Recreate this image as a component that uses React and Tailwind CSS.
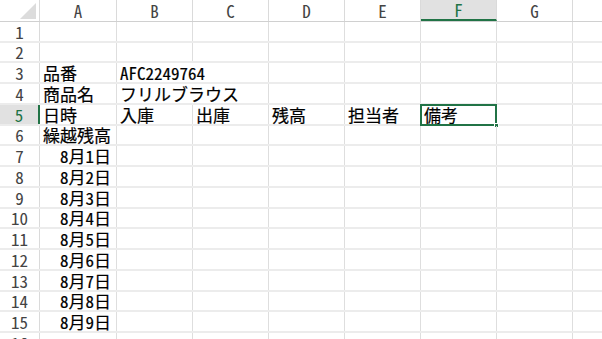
import React from "react";

const FONT = { fontFamily: '"Noto Sans Mono CJK JP", "Noto Sans CJK JP", monospace' };

const colW = ["w-[77px]", "w-[76px]", "w-[76px]", "w-[76px]", "w-[76px]", "w-[76px]", "w-[76px]"];
const letters = ["A", "B", "C", "D", "E", "F", "G"];
const rowH = [21, 20, 21, 21, 21, 20, 21, 21, 21, 20, 21, 21, 21, 20, 21, 21];
const hCls = { 20: "h-[20px]", 21: "h-[21px]" };

const data = {
  3: { 0: "品番", 1: "AFC2249764" },
  4: { 0: "商品名", 1: "フリルブラウス" },
  5: { 0: "日時", 1: "入庫", 2: "出庫", 3: "残高", 4: "担当者", 5: "備考" },
  6: { 0: "繰越残高" },
};
for (let i = 7; i <= 15; i++) data[i] = { 0: `8月${i - 6}日`, right: true };

export default function App() {
  return (
    <div className="w-[602px] h-[339px] overflow-hidden bg-white text-[17px] text-black" style={FONT}>
      {/* column header */}
      <div className="flex h-[22px] border-b border-[#d0d0d0]">
        <div className="relative w-[40px] shrink-0 border-r border-[#dadada]">
          <div className="absolute right-[3px] bottom-[2px] w-0 h-0 border-l-[16px] border-l-transparent border-b-[16px] border-b-[#dcdcdc]" />
        </div>
        {letters.map((l, i) => {
          const sel = l === "F";
          return (
            <div
              key={l}
              className={`${colW[i]} shrink-0 border-r border-[#dadada] flex items-center justify-center leading-[20px] ${
                sel ? "bg-[#e1e1e1] text-[#217346] border-b-2 border-b-[#217346]" : "text-[#444]"
              }`}
            >
              {l}
            </div>
          );
        })}
        <div className="flex-1" />
      </div>
      {rowH.map((h, ri) => {
        const r = ri + 1;
        const rowSel = r === 5;
        const d = data[r] || {};
        return (
          <div key={r} className={`flex ${hCls[h]} border-b-2 border-[#ececec]`}>
            <div
              className={`w-[40px] shrink-0 flex items-end justify-center leading-[19px] ${
                rowSel
                  ? "bg-[#e1e1e1] text-[#217346] border-r-2 border-r-[#217346]"
                  : "text-[#444] border-r border-r-[#dadada]"
              }`}
            >
              {r}
            </div>
            {colW.map((w, ci) => {
              const txt = d[ci];
              const noBorder = (r === 3 || r === 4) && ci === 1;
              const isSel = r === 5 && ci === 5;
              return (
                <div
                  key={ci}
                  className={`${w} shrink-0 relative flex items-end leading-[19px] whitespace-nowrap [-webkit-text-stroke:0.2px_black] ${
                    noBorder ? "" : "border-r border-[#dedede]"
                  } ${d.right && ci === 0 ? "justify-end pr-[5px]" : "pl-[3px]"}`}
                >
                  {txt && <span className="relative">{txt}</span>}
                  {isSel && (
                    <div className="absolute -left-[1px] -top-[1px] -right-[1px] -bottom-[2px] border-2 border-[#217346]">
                      <div className="absolute -right-[4px] -bottom-[4px] w-[5px] h-[5px] bg-[#217346] border border-white" />
                    </div>
                  )}
                </div>
              );
            })}
            <div className="flex-1" />
          </div>
        );
      })}
    </div>
  );
}
